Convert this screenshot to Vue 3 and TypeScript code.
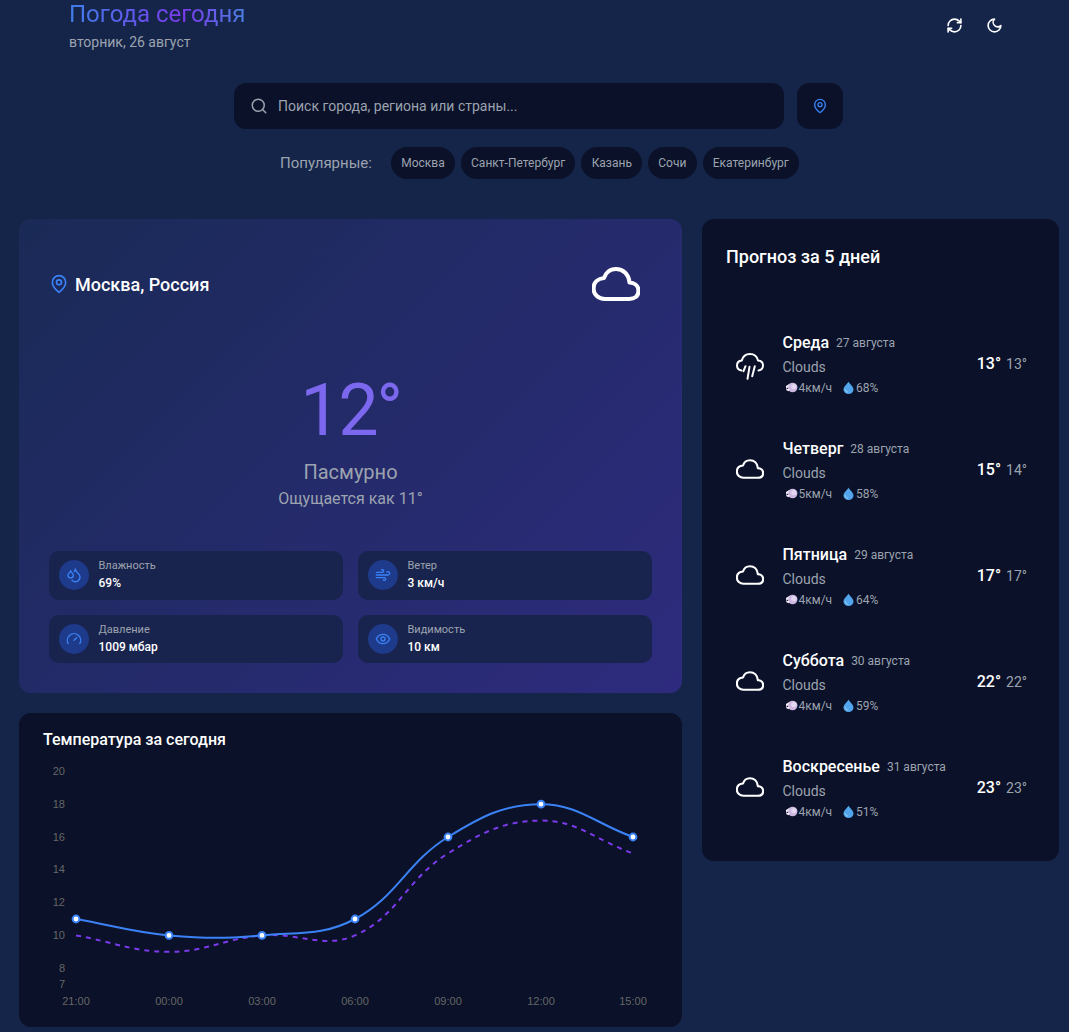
<script setup lang="ts">
interface Pt { x: number; y: number }
const xs = [76, 169, 262, 355, 448, 541, 633]
const yOf = (v: number) => 935.4 - (v - 10) * 16.4
const labels = ['21:00', '00:00', '03:00', '06:00', '09:00', '12:00', '15:00']
const ticks = [20, 18, 16, 14, 12, 10, 8, 7]
const actual = [11, 10, 10, 11, 16, 18, 16]
const feels = [10, 9, 10, 10, 15, 17, 15]

function spline(values: number[]): string {
  const pts: Pt[] = values.map((v, i) => ({ x: xs[i], y: yOf(v) }))
  const t = 0.4
  const cps = pts.map((cur, i) => {
    const prev = pts[i - 1] ?? cur
    const next = pts[i + 1] ?? cur
    const d01 = Math.hypot(cur.x - prev.x, cur.y - prev.y)
    const d12 = Math.hypot(next.x - cur.x, next.y - cur.y)
    const sum = d01 + d12 || 1
    const fa = (t * d01) / sum
    const fb = (t * d12) / sum
    return {
      px: cur.x - fa * (next.x - prev.x),
      py: cur.y - fa * (next.y - prev.y),
      nx: cur.x + fb * (next.x - prev.x),
      ny: cur.y + fb * (next.y - prev.y),
    }
  })
  let d = `M${pts[0].x} ${pts[0].y}`
  for (let i = 1; i < pts.length; i++) {
    d += ` C${cps[i - 1].nx} ${cps[i - 1].ny} ${cps[i].px} ${cps[i].py} ${pts[i].x} ${pts[i].y}`
  }
  return d
}
const actualPath = spline(actual)
const feelsPath = spline(feels)
const dots = actual.map((v, i) => ({ x: xs[i], y: yOf(v) }))

const cloudPath = 'M400 240c-8.89-89.54-71-144-144-144-69 0-113.44 48.2-128 96C68 198 16 235.59 16 304c0 66 54 112 120 112h260c55 0 100-27.44 100-88 0-59.82-53-85.76-96-88z'
const cities = ['Москва', 'Санкт-Петербург', 'Казань', 'Сочи', 'Екатеринбург']
const forecast = [
  { day: 'Среда', date: '27 августа', wind: '4км/ч', hum: '68%', hi: '13°', lo: '13°', rain: true },
  { day: 'Четверг', date: '28 августа', wind: '5км/ч', hum: '58%', hi: '15°', lo: '14°', rain: false },
  { day: 'Пятница', date: '29 августа', wind: '4км/ч', hum: '64%', hi: '17°', lo: '17°', rain: false },
  { day: 'Суббота', date: '30 августа', wind: '4км/ч', hum: '59%', hi: '22°', lo: '22°', rain: false },
  { day: 'Воскресенье', date: '31 августа', wind: '4км/ч', hum: '51%', hi: '23°', lo: '23°', rain: false },
]
</script>

<template>
  <div class="page">
    <header class="top">
      <div>
        <h1 class="title">Погода сегодня</h1>
        <p class="today">вторник, 26 август</p>
      </div>
      <div class="top-actions">
        <svg class="ic17" viewBox="0 0 24 24"><path d="M3 12a9 9 0 0 1 9-9 9.75 9.75 0 0 1 6.74 2.74L21 8" /><path d="M21 3v5h-5" /><path d="M21 12a9 9 0 0 1-9 9 9.75 9.75 0 0 1-6.74-2.74L3 16" /><path d="M8 16H3v5" /></svg>
        <svg class="ic17" viewBox="0 0 24 24"><path d="M12 3a6 6 0 0 0 9 9 9 9 0 1 1-9-9Z" /></svg>
      </div>
    </header>

    <div class="search-row">
      <div class="search">
        <svg class="ic18 muted" viewBox="0 0 24 24"><circle cx="11" cy="11" r="8" /><path d="m21 21-4.3-4.3" /></svg>
        <span>Поиск города, региона или страны...</span>
      </div>
      <div class="locate">
        <svg class="ic16 blue" viewBox="0 0 24 24"><path d="M20 10c0 6-8 12-8 12s-8-6-8-12a8 8 0 0 1 16 0Z" /><circle cx="12" cy="10" r="3" /></svg>
      </div>
    </div>

    <div class="popular">
      <span class="popular-label">Популярные:</span>
      <div class="chips">
        <span v-for="c in cities" :key="c" class="chip">{{ c }}</span>
      </div>
    </div>

    <main class="grid">
      <div class="left">
        <section class="hero">
          <div class="hero-top">
            <div class="place">
              <svg class="ic20 blue" viewBox="0 0 24 24"><path d="M20 10c0 6-8 12-8 12s-8-6-8-12a8 8 0 0 1 16 0Z" /><circle cx="12" cy="10" r="3" /></svg>
              <span>Москва, Россия</span>
            </div>
            <svg class="hero-cloud" viewBox="0 0 512 512"><path :d="cloudPath" /></svg>
          </div>
          <div class="now">
            <div class="temp">12°</div>
            <div class="cond">Пасмурно</div>
            <div class="feels">Ощущается как 11°</div>
          </div>
          <div class="stats">
            <div class="stat">
              <span class="stat-ic"><svg class="ic16 blue" viewBox="0 0 24 24"><path d="M7 16.3c2.2 0 4-1.83 4-4.05 0-1.16-.57-2.26-1.71-3.19S7.29 6.75 7 5.3c-.29 1.45-1.14 2.84-2.29 3.76S3 11.1 3 12.25c0 2.22 1.8 4.05 4 4.05z" /><path d="M12.56 6.6A10.97 10.97 0 0 0 14 3.02c.5 2.5 2 4.9 4 6.5s3 3.5 3 5.5a6.98 6.98 0 0 1-11.91 4.97" /></svg></span>
              <div><div class="stat-label">Влажность</div><div class="stat-value">69%</div></div>
            </div>
            <div class="stat">
              <span class="stat-ic"><svg class="ic16 blue" viewBox="0 0 24 24"><path d="M17.7 7.7a2.5 2.5 0 1 1 1.8 4.3H2" /><path d="M9.6 4.6A2 2 0 1 1 11 8H2" /><path d="M12.6 19.4A2 2 0 1 0 14 16H2" /></svg></span>
              <div><div class="stat-label">Ветер</div><div class="stat-value">3 км/ч</div></div>
            </div>
            <div class="stat">
              <span class="stat-ic"><svg class="ic16 blue" viewBox="0 0 24 24"><path d="m12 14 4-4" /><path d="M3.34 19a10 10 0 1 1 17.32 0" /></svg></span>
              <div><div class="stat-label">Давление</div><div class="stat-value">1009 мбар</div></div>
            </div>
            <div class="stat">
              <span class="stat-ic"><svg class="ic16 blue" viewBox="0 0 24 24"><path d="M2 12s3-7 10-7 10 7 10 7-3 7-10 7-10-7-10-7Z" /><circle cx="12" cy="12" r="3" /></svg></span>
              <div><div class="stat-label">Видимость</div><div class="stat-value">10 км</div></div>
            </div>
          </div>
        </section>

        <section class="chart-card">
          <h2 class="chart-title">Температура за сегодня</h2>
          <svg class="chart" viewBox="43 757 615 258">
            <g class="y-ticks">
              <text v-for="t in ticks" :key="t" x="65" :y="yOf(t) + 3.5" text-anchor="end">{{ t }}</text>
            </g>
            <g class="x-ticks">
              <text v-for="(l, i) in labels" :key="l" :x="xs[i]" y="1005" text-anchor="middle">{{ l }}</text>
            </g>
            <path class="line-feels" :d="feelsPath" />
            <path class="line-actual" :d="actualPath" />
            <circle v-for="d in dots" :key="d.x" class="dot" :cx="d.x" :cy="d.y" r="3.4" />
          </svg>
        </section>
      </div>

      <aside class="side">
        <h2 class="side-title">Прогноз за 5 дней</h2>
        <div class="rows">
          <div v-for="f in forecast" :key="f.day" class="row">
            <svg v-if="f.rain" class="rain-ic" viewBox="0 -8 28 36"><path d="M5.5 17.5C2.9 17 1 15 1 12.5 1 9.8 3 7.8 5.8 7.5 6.8 3.7 10 1 14 1c4.2 0 7.3 2.8 8 6.5 3 .2 5 2.3 5 5 0 2.5-2 4.5-4.5 5" /><path d="m7.5 18.2 2-5" /><path d="m11.5 25.8 2-12" /><path d="m16.2 23.2 2.6-10" /></svg>
            <svg v-else class="row-ic" viewBox="0 0 512 512"><path :d="cloudPath" /></svg>
            <div class="row-body">
              <div class="row-head"><span class="day">{{ f.day }}</span><span class="date">{{ f.date }}</span></div>
              <div class="row-cond">Clouds</div>
              <div class="row-meta">
                <span class="meta-item">
                  <svg class="emoji" viewBox="0 0 14 14"><circle cx="8.2" cy="7" r="5.2" fill="#cdb8e2" /><circle cx="9.5" cy="6" r="2.8" fill="#e4d8f0" /><path d="M1 5.5 5 3 3.5 6.5 1.5 8.5 5 8.5 4 11 1.5 10Z" fill="#f3eef8" /></svg>{{ f.wind }}
                </span>
                <span class="meta-item">
                  <svg class="emoji" viewBox="0 0 14 14"><path d="M7 .5C8 3 12.4 5.8 12.4 9.2a5.4 4.8 0 0 1-10.8 0C1.6 5.8 6 3 7 .5Z" fill="#52a5ea" /><path d="M3.6 9.3c.2 1.4 1 2.2 2.2 2.6" stroke="#a8d6f7" stroke-width="1" fill="none" /></svg>{{ f.hum }}
                </span>
              </div>
            </div>
            <div class="row-temps"><span class="hi">{{ f.hi }}</span><span class="lo">{{ f.lo }}</span></div>
          </div>
        </div>
      </aside>
    </main>
  </div>
</template>

<style>
html, body { margin: 0; background: #15254a; }
</style>

<style scoped>
.page {
  min-height: 1032px;
  box-sizing: border-box;
  padding: 0 10px 0 19px;
  background: #15254a;
  font-family: Roboto, "Noto Sans", sans-serif;
  color: #fff;
  overflow: hidden;
}
svg { fill: none; stroke: currentColor; stroke-width: 2; stroke-linecap: round; stroke-linejoin: round; flex: none; }
.ic20 { width: 20px; height: 20px; }
.ic18 { width: 18px; height: 18px; }
.ic17 { width: 17px; height: 17px; stroke-width: 2.3; }
.ic16 { width: 16px; height: 16px; }
.muted { color: #9ca3af; }
.blue { color: #3b82f6; }

.top { display: flex; justify-content: space-between; padding: 0 56px 0 50px; height: 83px; }
.title {
  margin: 0;
  font-size: 24px;
  line-height: 28px;
  font-weight: 400;
  background: linear-gradient(90deg, #3f7fe8, #7c3aed 65%, #4a7fe0);
  -webkit-background-clip: text;
  background-clip: text;
  color: transparent;
}
.today { margin: 6px 0 0; font-size: 14px; line-height: 16px; color: #9ca3af; }
.top-actions { display: flex; gap: 23.5px; padding-top: 17px; height: 17px; }

.search-row { display: flex; gap: 13px; padding-left: 215px; }
.search {
  width: 550px; height: 46px; box-sizing: border-box; padding: 0 16px;
  background: #0a1128; border-radius: 12px;
  display: flex; align-items: center; gap: 10px;
  font-size: 14px; color: #9ca3af;
}
.locate {
  width: 46px; height: 46px; background: #0a1128; border-radius: 12px;
  display: flex; align-items: center; justify-content: center;
}
.popular { display: flex; align-items: center; padding: 18px 0 0 261px; height: 32px; }
.popular-label { font-size: 15px; color: #9ca3af; width: 111px; }
.chips { display: flex; gap: 6px; }
.chip {
  height: 32px; line-height: 32px; padding: 0 10.2px; border-radius: 16px;
  background: #0a1128; font-size: 12px; color: #9ca3af;
}

.grid { display: grid; grid-template-columns: 663px 357px; gap: 20px; padding-top: 40px; align-items: start; }
.left { display: flex; flex-direction: column; gap: 20px; }

.hero {
  border-radius: 12px; padding: 30px; height: 474px; box-sizing: border-box;
  background: linear-gradient(135deg, #1a2a56, #2e2b7e);
  display: flex; flex-direction: column;
}
.hero-top { display: flex; justify-content: space-between; align-items: center; padding: 11px 12px 0 0; }
.place { display: flex; align-items: center; gap: 6px; font-size: 18px; font-weight: 500; }
.hero-cloud { width: 48px; height: 48px; color: #fff; stroke-width: 44; }
.now { text-align: center; padding-top: 61px; }
.temp { font-size: 72px; line-height: 84px; font-weight: 400; letter-spacing: -2.5px; color: #7b68ee; }
.cond { font-size: 20px; line-height: 24px; color: #9ca3af; margin-top: 7px; }
.feels { font-size: 16px; line-height: 20px; color: #9ca3af; margin-top: 5px; }
.stats { display: grid; grid-template-columns: 294px 294px; column-gap: 15px; row-gap: 15px; margin-top: auto; }
.stat {
  height: 48.5px; box-sizing: border-box; padding: 0 10px; border-radius: 10px;
  background: #19244e; display: flex; align-items: center; gap: 9.5px;
}
.stat-ic {
  width: 30px; height: 30px; border-radius: 50%; background: #1e3a8a;
  display: flex; align-items: center; justify-content: center;
}
.stat-label { font-size: 11px; line-height: 14px; color: #9ca3af; }
.stat-value { font-size: 12px; line-height: 15px; font-weight: 500; margin-top: 3px; }

.chart-card {
  height: 314px; box-sizing: border-box; padding: 17px 24px 0;
  background: #0a1128; border-radius: 12px;
}
.chart-title { margin: 0; font-size: 16px; line-height: 19px; font-weight: 500; }
.chart { display: block; width: 615px; height: 258px; margin-top: 8px; stroke-width: 0; }
.chart text { font-family: "Liberation Sans", Arial, sans-serif; font-size: 11px; fill: #666; stroke: none; }
.line-actual { fill: none; stroke: #3b82f6; stroke-width: 2; }
.line-feels { fill: none; stroke: #7c3aed; stroke-width: 2; stroke-dasharray: 5 5; stroke-linecap: butt; }
.dot { fill: #fff; stroke: #3b82f6; stroke-width: 2; }

.side { background: #0a1128; border-radius: 12px; height: 642px; box-sizing: border-box; padding: 27px 24px 0; }
.side-title { margin: 0; font-size: 18px; line-height: 21px; font-weight: 500; }
.rows { padding-top: 43px; }
.row { height: 106px; box-sizing: border-box; padding: 0 8px 0 10px; display: flex; align-items: center; gap: 18.5px; }
.row-ic { width: 28px; height: 28px; color: #fff; stroke-width: 40; }
.rain-ic { width: 28px; height: 36px; color: #fff; stroke-width: 2; }
.row-body { flex: 1; min-width: 0; padding-top: 2px; }
.row-head { display: flex; align-items: center; gap: 7px; height: 20px; }
.day { font-size: 16px; font-weight: 500; }
.date { font-size: 12px; color: #9ca3af; }
.row-cond { font-size: 14px; line-height: 18px; color: #9ca3af; margin-top: 5px; }
.row-meta { display: flex; gap: 8px; margin-top: 4px; font-size: 12px; line-height: 16px; color: #9ca3af; }
.meta-item { display: flex; align-items: center; gap: 1px; padding-left: 2px; }
.emoji { width: 13px; height: 13px; stroke: none; }
.row-temps { display: flex; align-items: baseline; gap: 5px; }
.hi { font-size: 16px; font-weight: 500; }
.lo { font-size: 14px; color: #9ca3af; }
</style>
